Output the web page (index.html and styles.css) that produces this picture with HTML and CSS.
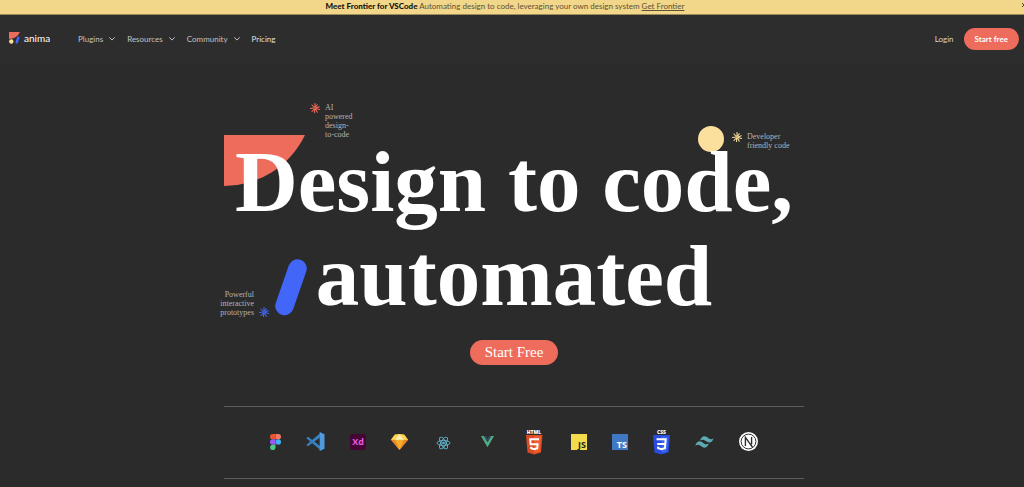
FILE: index.html
```html
<!DOCTYPE html>
<html lang="en">
<head>
<meta charset="utf-8">
<meta name="viewport" content="width=device-width, initial-scale=1">
<title>Anima</title>
<link rel="stylesheet" href="styles.css">
</head>
<body>
<svg class="defs" width="0" height="0" aria-hidden="true">
  <symbol id="chevron" viewBox="0 0 6 4"><path d="M.6.6 3 3.1 5.4.6" fill="none" stroke="currentColor" stroke-width="1" stroke-linecap="round" stroke-linejoin="round"/></symbol>
  <symbol id="spark" viewBox="0 0 20 20"><path d="M10 1v7M14.500 3.500 11.500 8M18.500 7.500 12 10M19 13l-7-2M14.500 18.500 11 12M9 19l.5-7M4 17l4.500-5M1 11l7-1M4 4l4.500 5" fill="none" stroke="currentColor" stroke-width="2.200" stroke-linecap="round"/></symbol>
</svg>
<div class="banner">
  <p class="banner-text"><strong>Meet Frontier for VSCode</strong> Automating design to code, leveraging your own design system <a href="#frontier">Get Frontier</a></p>
  <button class="banner-close" type="button" aria-label="Close"><svg viewBox="0 0 6 6" width="6" height="6"><path d="M1 1l4 4M5 1 1 5" stroke="currentColor" stroke-width="1"/></svg></button>
</div>
<header class="header">
  <a class="logo" href="#home">
    <svg viewBox="0 0 11 12" width="11" height="12" aria-hidden="true"><path d="M0 0h11A12 12 0 0 1 0 7z" fill="#ee6c5b"/><circle cx="2.300" cy="9.500" r="2.200" fill="#fbdf9d"/><path d="m9.300 5.700-1.600 4.600" stroke="#4166f8" stroke-width="2.500" stroke-linecap="round"/></svg>
    <span>anima</span>
  </a>
  <nav class="nav">
    <button type="button">Plugins <svg width="6" height="4"><use href="#chevron"/></svg></button>
    <button type="button">Resources <svg width="6" height="4"><use href="#chevron"/></svg></button>
    <button type="button">Community <svg width="6" height="4"><use href="#chevron"/></svg></button>
    <a class="bright" href="#pricing">Pricing</a>
  </nav>
  <div class="account">
    <a href="#login">Login</a>
    <a class="pill" href="#start">Start free</a>
  </div>
</header>
<main class="hero">
  <div class="headline">
    <svg class="shape-corner" viewBox="0 0 81 51" width="81" height="51" aria-hidden="true"><path d="M0 0h81A90 90 0 0 1 0 51z" fill="#ee6c5b"/></svg>
    <svg class="shape-dot" viewBox="0 0 26 26" width="26" height="26" aria-hidden="true"><circle cx="13" cy="13" r="13" fill="#fbdf9d"/></svg>
    <svg class="shape-slash" viewBox="0 0 32 57" width="32" height="57" aria-hidden="true"><path d="M22.500 9.500 9.500 47" stroke="#4166f8" stroke-width="18.500" stroke-linecap="round"/></svg>
    <p class="note note-ai"><svg class="red" width="10" height="10"><use href="#spark"/></svg><span>AI<br>powered<br>design-<br>to-code</span></p>
    <p class="note note-dev"><svg class="yellow" width="10" height="10"><use href="#spark"/></svg><span>Developer<br>friendly code</span></p>
    <p class="note note-proto"><span>Powerful<br>interactive<br>prototypes</span><svg class="blue" width="10" height="10"><use href="#spark"/></svg></p>
    <h1>Design to code,<br>automated</h1>
  </div>
  <a class="cta" href="#start">Start Free</a>
  <section class="tools" aria-label="Supported tools">
    <svg width="11" height="16" viewBox="0 0 11 16"><path d="M2.700 0h2.800v5.300H2.700a2.650 2.650 0 0 1 0-5.300z" fill="#ea5430"/><path d="M5.500 0h2.800a2.650 2.650 0 0 1 0 5.300H5.500z" fill="#f57867"/><path d="M2.700 5.300h2.800v5.400H2.700a2.700 2.700 0 0 1 0-5.400z" fill="#9b5af5"/><circle cx="8.300" cy="8" r="2.700" fill="#41b0f2"/><path d="M2.700 10.700h2.800v2.600a2.700 2.700 0 1 1-2.800-2.600z" fill="#4fc987"/></svg>
    <svg width="19" height="19" viewBox="0 0 19 19"><path d="M.5 6 2 4.700l13 10.100v3.700L.7 6.600z" fill="#3680c4"/><path d="M.5 13 2 14.300 15 4.800V.5L.7 12.400z" fill="#3680c4"/><path d="M13.700 0 18.500 2.200v14.500L13.700 19V0z" fill="#4f9bdc"/></svg>
    <svg class="badge" width="16" height="16" viewBox="0 0 16 16"><rect width="16" height="16" rx="2.500" fill="#450535"/><text x="8" y="11" text-anchor="middle" fill="#e55de0">Xd</text></svg>
    <svg width="17" height="16" viewBox="0 0 17 16"><path d="M3.700.8 8.500 0l4.800.8L17 5.700 8.500 16 0 5.700z" fill="#f5ad2c"/><path d="M0 5.700h4L8.500 16z" fill="#e6842a"/><path d="M17 5.700h-4L8.500 16z" fill="#e6842a"/><path d="M3.700.8 8.500 0 4 5.700H0z" fill="#ffd450"/><path d="m13.300.8-4.800-.8L13 5.700h4z" fill="#ffd450"/><path d="M8.500 0 4 5.700h9z" fill="#fff0b8"/></svg>
    <svg width="20" height="16" viewBox="0 0 20 16"><g fill="none" stroke="#5fb6d0" stroke-width=".9"><ellipse cx="10.500" cy="9" rx="6.500" ry="2.500"/><ellipse cx="10.500" cy="9" rx="6.500" ry="2.500" transform="rotate(60 10.500 9)"/><ellipse cx="10.500" cy="9" rx="6.500" ry="2.500" transform="rotate(120 10.500 9)"/></g><circle cx="10.500" cy="9" r="1.300" fill="#5fb6d0"/></svg>
    <svg width="19" height="16" viewBox="0 0 19 16"><path d="M3 2h3l3.500 6L13 2h3L9.500 13.200z" fill="#4fae83"/><path d="M5.600 2H8l1.500 2.500L11 2h2.400L9.500 8.600z" fill="#35495e"/></svg>
    <svg class="shield" width="24" height="26" viewBox="0 0 24 26"><text x="12" y="4.500" text-anchor="middle" fill="#fff">HTML</text><path d="M4 6h16.500L19 23.500 12.200 25.500 5.500 23.500z" fill="#dd4b26"/><path d="M12.200 7.400h6.800l-1.300 15-5.500 1.700z" fill="#ec6331"/><path d="M17 10.300H8.200l.4 5h7l-.4 4-3 .9-3-.9-.1-1.600" fill="none" stroke="#fff" stroke-width="2"/></svg>
    <svg class="badge" width="16" height="16" viewBox="0 0 16 16"><path d="M0 0h16v16H0z" fill="#f2dc4e"/><text x="15" y="14" text-anchor="end" fill="#222">JS</text></svg>
    <svg class="badge" width="16" height="16" viewBox="0 0 16 16"><path d="M0 0h16v16H0z" fill="#4178c3"/><text x="15" y="14" text-anchor="end" fill="#fff">TS</text></svg>
    <svg class="shield" width="17" height="26" viewBox="0 0 17 26"><text x="8.500" y="4.500" text-anchor="middle" fill="#fff">CSS</text><path d="M0 6h17l-1.500 17.500-7 2-7-2z" fill="#284be0"/><path d="M8.500 7.400h7l-1.300 15-5.700 1.700z" fill="#3c65ef"/><path d="M3.500 10.300h9.200l-.8 9-3.400 1-3.300-1-.1-1.700M4.200 15h8" fill="none" stroke="#fff" stroke-width="2"/></svg>
    <svg width="19" height="12" viewBox="0 0 19 12"><path d="M5 4.600C6.200.4 9-.9 12 1c1.700 1.100 3 3.400 6.500 1.500C17.200 6.500 14.500 7.500 11.700 5.600 9.800 4.300 8.500 2.500 5 4.600z" fill="#5daab2"/><path d="M.3 9.700C1.600 5.600 4.400 4.300 7.300 6.200c1.700 1.100 3 3.300 6.500 1.400-1.300 4.100-4 5.100-6.800 3.200C5 9.500 3.800 7.700.3 9.700z" fill="#5daab2"/></svg>
    <svg width="19" height="19" viewBox="0 0 19 19"><circle cx="9.500" cy="9.500" r="9.500" fill="#fff"/><circle cx="9.500" cy="9.500" r="7.400" fill="none" stroke="#333" stroke-width="1"/><path d="M6.400 14V5.300l7.200 10.100M12.600 5v7.400" fill="none" stroke="#292929" stroke-width="1.350"/></svg>
  </section>
</main>
</body>
</html>
```
FILE: styles.css
```css
* {
  box-sizing: border-box;
}

body {
  margin: 0;
  min-height: 100vh;
  background: #2b2b2b;
  color: #fff;
  font: 8px/12px Lato, sans-serif;
  overflow-x: hidden;
}

a {
  color: inherit;
  text-decoration: none;
}

button {
  border: 0;
  padding: 0;
  background: none;
  color: inherit;
  font: inherit;
  cursor: pointer;
}

svg {
  display: block;
  flex: none;
}

.defs {
  position: absolute;
}

.banner {
  position: relative;
  overflow: hidden;
  padding: 0 14px 2px 0;
  border-bottom: 1px solid #9b8b5c;
  background: #f2d689;
  color: #5d5235;
  text-align: center;
}

.banner-text {
  margin: 0;
}

.banner strong {
  color: #15130d;
  font-weight: 900;
}

.banner a {
  text-decoration: underline;
}

.banner-close {
  position: absolute;
  top: 2px;
  right: -3px;
  color: #4c442e;
}

.header {
  display: flex;
  align-items: center;
  height: 48px;
  padding: 0 5px 0 9px;
  background: #2d2d2d;
}

.logo {
  display: flex;
  align-items: center;
  gap: 4px;
  width: 69px;
  padding-bottom: 2px;
  font-size: 10px;
}

.nav {
  display: flex;
  gap: 12px;
  color: #c2c2c2;
}

.nav button {
  display: flex;
  align-items: center;
  gap: 6px;
}

.nav .bright {
  color: #e0e0e0;
}

.account {
  display: flex;
  align-items: center;
  gap: 10px;
  margin-left: auto;
  color: #d6d6d6;
}

.pill {
  padding: 5px 11px;
  border-radius: 11px;
  background: #ee6c5b;
  color: #fff;
  font-weight: 700;
}

.hero {
  display: flex;
  flex-direction: column;
  align-items: center;
  padding: 72px 0 8px 4px;
  font-family: "Liberation Serif", serif;
}

.headline {
  position: relative;
  width: 580px;
  max-width: 100%;
}

h1 {
  position: relative;
  margin: 0;
  font-size: 87px;
  line-height: 94px;
  font-weight: 700;
  text-align: center;
}

.shape-corner {
  position: absolute;
  top: 0;
  left: 0;
}

.shape-dot {
  position: absolute;
  top: -9px;
  right: 80px;
}

.shape-slash {
  position: absolute;
  top: 124px;
  left: 51px;
}

.note {
  position: absolute;
  display: flex;
  gap: 5px;
  margin: 0;
  color: #b4b4b4;
  font-size: 8px;
  line-height: 9px;
}

.note-ai {
  top: -32px;
  left: 86px;
}

.note-dev {
  top: -3px;
  left: 508px;
}

.note-proto {
  top: 155px;
  right: 535px;
  align-items: flex-end;
  text-align: right;
}

.red {
  color: #ee6c5b;
}

.yellow {
  color: #fbdf9d;
}

.blue {
  color: #4166f8;
}

.cta {
  margin-top: 17px;
  padding: 4px 15px;
  border-radius: 13px;
  background: #ee6c5b;
  font-size: 15px;
  line-height: 17px;
}

.tools {
  display: flex;
  align-items: center;
  justify-content: center;
  gap: 25px;
  width: 580px;
  max-width: 100%;
  height: 73px;
  margin-top: 41px;
  padding-bottom: 2px;
  border: solid #5c5c5c;
  border-width: 1px 0;
}

.badge {
  font: 700 9px "Open Sans", sans-serif;
}

.shield {
  font: 800 5px "Open Sans", sans-serif;
}
```
